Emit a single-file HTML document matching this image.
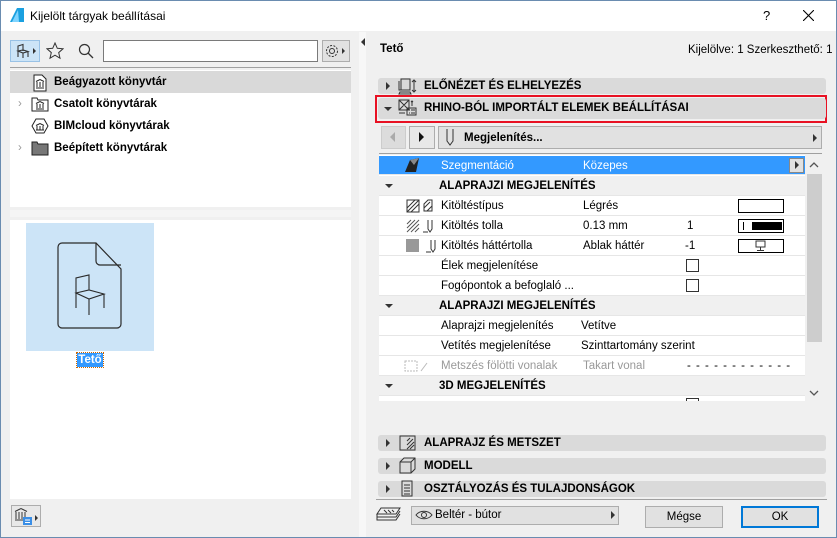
<!DOCTYPE html>
<html><head><meta charset="utf-8"><style>
*{box-sizing:border-box;margin:0;padding:0}
body{width:837px;height:538px;overflow:hidden;background:#f0f0f0;font-family:"Liberation Sans",sans-serif;font-size:11.5px;color:#000;position:relative}
.a{position:absolute}
.b{font-weight:bold}
.row{position:absolute;left:379px;width:426px;height:20px;background:#fff;border-bottom:1px solid #e6e6e6}
.row span{position:absolute;top:4px;white-space:nowrap}
.hdr{background:#f0f0f0}
.ph{position:absolute;left:378px;width:448px;height:16px;background:#dadada;border-radius:3px}
.ph span{position:absolute;top:2px;font-weight:bold;font-size:11.5px}
.tri{position:absolute;width:0;height:0;border-top:4px solid transparent;border-bottom:4px solid transparent;border-left:4px solid #333}
.trd{position:absolute;width:0;height:0;border-left:4px solid transparent;border-right:4px solid transparent;border-top:4px solid #333}
.cb{position:absolute;width:13px;height:13px;border:1px solid #333;background:#fff}
.sw{position:absolute;left:738px;width:46px;height:14px;border:1px solid #000;background:#fff;top:3px}
</style></head><body>
<div class="a" style="left:0;top:0;width:837px;height:538px;border:1px solid #6a8cb0"></div>
<div class="a" style="left:1px;top:1px;width:835px;height:30px;background:#fff"></div>
<svg class="a" style="left:9px;top:7px" width="16" height="16"><path d="M1 15 L8 1 L15 1 L15 15 Z" fill="#1aa0e0"/><path d="M3 15 L9 3 L10 15Z" fill="#7fd4ff"/></svg>
<div class="a" style="left:30px;top:9px;font-size:12px">Kijelölt tárgyak beállításai</div>
<div class="a" style="left:763px;top:8px;font-size:13px">?</div>
<svg class="a" style="left:803px;top:10px" width="11" height="11"><path d="M0 0L11 11M11 0L0 11" stroke="#000" stroke-width="1.1"/></svg>

<div class="a" style="left:10px;top:40px;width:30px;height:22px;background:#cce4f7;border:1px solid #99c2e6"></div>
<svg class="a" style="left:13px;top:42px" width="26" height="18"><path d="M5 15V4l5-1.5V9M5 9l5-1 5 1.5-5 1.5zM10 10.5V16M15 9.5V15" stroke="#333" fill="none" stroke-width="1.1"/><path d="M20 6l3 3-3 3z" fill="#333"/></svg>
<svg class="a" style="left:46px;top:42px" width="18" height="18"><path d="M9 1l2.3 5.3 5.7.5-4.3 3.8 1.3 5.6L9 13.2 4 16.2l1.3-5.6L1 6.8l5.7-.5z" stroke="#333" fill="none"/></svg>
<svg class="a" style="left:77px;top:42px" width="18" height="18"><circle cx="7.5" cy="7.5" r="5" stroke="#333" fill="none" stroke-width="1.2"/><path d="M11 11l5 5" stroke="#333" stroke-width="1.3"/></svg>
<div class="a" style="left:103px;top:40px;width:215px;height:22px;background:#fff;border:1px solid #7a7a7a"></div>
<div class="a" style="left:322px;top:40px;width:28px;height:22px;background:#e1e1e1;border:1px solid #adadad"></div>
<svg class="a" style="left:324px;top:42px" width="24" height="18"><circle cx="8" cy="9" r="5.5" stroke="#333" fill="none" stroke-dasharray="2 1.4"/><circle cx="8" cy="9" r="2.5" stroke="#333" fill="none"/><path d="M18 6l3 3-3 3z" fill="#333"/></svg>
<div class="a" style="left:10px;top:67px;width:341px;height:1px;background:#a0a0a0"></div>

<div class="a" style="left:10px;top:70px;width:341px;height:137px;background:#fff"></div>
<div class="a" style="left:10px;top:71px;width:341px;height:22px;background:#d9d9d9"></div>
<svg class="a" style="left:32px;top:74px" width="16" height="18"><path d="M2 1h8l4 4v12H2z" stroke="#222" fill="#fff"/><path d="M4 14h8M5 8v5M8 8v5M11 8v5M4 7.5l4-2 4 2" stroke="#222" fill="none"/></svg>
<div class="a b" style="left:54px;top:76px">Beágyazott könyvtár</div>
<div class="a" style="left:18px;top:98px;color:#999">›</div>
<svg class="a" style="left:31px;top:96px" width="18" height="16"><path d="M1 2h5l1 2h10v11H1z" stroke="#222" fill="#fff"/><path d="M5 13h8M6 8v4M9 8v4M12 8v4M5 7.5l4-2 4 2" stroke="#222" fill="none"/></svg>
<div class="a b" style="left:54px;top:98px">Csatolt könyvtárak</div>
<svg class="a" style="left:31px;top:118px" width="18" height="16"><path d="M5 1h8l4 7-4 7H5L1 8z" stroke="#222" fill="#fff"/><path d="M5 12h8M6 8v4M9 8v4M12 8v4M5 7.5l4-2 4 2" stroke="#222" fill="none"/></svg>
<div class="a b" style="left:54px;top:120px">BIMcloud könyvtárak</div>
<div class="a" style="left:18px;top:142px;color:#999">›</div>
<svg class="a" style="left:31px;top:140px" width="18" height="16"><path d="M1 2h5l1 2h10v11H1z" stroke="#222" fill="#777"/></svg>
<div class="a b" style="left:54px;top:142px">Beépített könyvtárak</div>

<div class="a" style="left:10px;top:210px;width:341px;height:7px;background:#f5f5f5"></div>
<div class="a" style="left:10px;top:220px;width:341px;height:279px;background:#fff"></div>
<div class="a" style="left:26px;top:223px;width:128px;height:128px;background:#cce4f7"></div>
<svg class="a" style="left:26px;top:223px" width="128" height="128"><path d="M36 20h34l25 26v55a4 4 0 0 1-4 4H36a4 4 0 0 1-4-4V24a4 4 0 0 1 4-4z" stroke="#2a2a2a" fill="none" stroke-width="1.2"/>
<path d="M70 20v18a4 4 0 0 0 4 4h21" stroke="#2a2a2a" fill="none" stroke-width="1.2"/>
<path d="M50 85V55l13-3v15M50 70l13-3 15 4-15 5zM63 76v16M78 71v14M50 70v15" stroke="#2a2a2a" fill="none" stroke-width="1.1"/></svg>
<div class="a" style="left:77px;top:353px;width:26px;height:14px;background:#3399ff;outline:1px dotted #c60;color:#fff;font-weight:bold;font-size:11.5px;text-align:center;line-height:14px">Tető</div>
<div class="a" style="left:11px;top:505px;width:30px;height:22px;border:1px solid #adadad;background:#e8e8e8"></div>
<svg class="a" style="left:13px;top:507px" width="28" height="20"><path d="M2 13h12M3 5v7M6 5v7M9 5v7M12 5v7M2 4.5l6-3 6 3" stroke="#333" fill="none"/><rect x="10" y="10" width="9" height="8" fill="#3a8ee6"/><path d="M12 13h5M12 15.5h5" stroke="#fff"/><path d="M22 8l3 3-3 3z" fill="#333"/></svg>

<div class="a" style="left:359px;top:32px;width:7px;height:505px;background:#f7f7f7"></div>
<div class="a" style="left:361px;top:38px;border-top:4px solid transparent;border-bottom:4px solid transparent;border-right:4px solid #333"></div>

<div class="a b" style="left:380px;top:43px">Tető</div>
<div class="a" style="left:688px;top:44px;font-size:11.5px">Kijelölve: 1 Szerkeszthető: 1</div>

<div class="ph" style="top:78px"><span style="left:46px">ELŐNÉZET ÉS ELHELYEZÉS</span></div>
<div class="tri" style="left:386px;top:82px"></div>
<svg class="a" style="left:398px;top:78px" width="20" height="17"><rect x="3" y="1" width="9" height="11" stroke="#333" fill="none"/><path d="M1 3v9h2M2 14h10l1 2H1zM16 2v12M14 4l2-2 2 2M14 12l2 2 2-2" stroke="#333" fill="none"/></svg>
<div class="a" style="left:375px;top:95px;width:452px;height:28px;border:2px solid #e81123"></div>
<div class="ph" style="top:98px;height:21px"><span style="left:46px;top:4px">RHINO-BÓL IMPORTÁLT ELEMEK BEÁLLÍTÁSAI</span></div>
<div class="trd" style="left:384px;top:107px"></div>
<svg class="a" style="left:398px;top:99px" width="20" height="18"><rect x="1" y="1" width="10" height="10" stroke="#333" fill="none"/><path d="M1 1l10 10M11 1L1 11M14 2v5M13 3l1-1 1 1M9 9h9v7H9zM11 11h1M13 11h4M11 14h1M13 14h4M1 14h6" stroke="#333" fill="none"/></svg>

<div class="a" style="left:381px;top:126px;width:25px;height:23px;background:#dcdcdc;border:1px solid #ccc"></div>
<div class="a" style="left:390px;top:132px;border-top:5px solid transparent;border-bottom:5px solid transparent;border-right:5px solid #aaa"></div>
<div class="a" style="left:409px;top:126px;width:26px;height:23px;background:#e8e8e8;border:1px solid #adadad"></div>
<div class="a" style="left:419px;top:132px;border-top:5px solid transparent;border-bottom:5px solid transparent;border-left:5px solid #111"></div>
<div class="a" style="left:438px;top:126px;width:384px;height:23px;background:#e1e1e1;border:1px solid #adadad"></div>
<svg class="a" style="left:445px;top:128px" width="10" height="19"><path d="M2 1v12l3 4 3-4V1" stroke="#333" fill="none"/></svg>
<div class="a b" style="left:464px;top:132px">Megjelenítés...</div>
<div class="tri" style="left:813px;top:134px"></div>
<div class="a" style="left:379px;top:153px;width:443px;height:1px;background:#a0a0a0"></div>

<div class="a" style="left:379px;top:155px;width:426px;height:246px;background:#fff;overflow:hidden"></div>
<div class="row" style="top:156px;height:19px;background:#3399ff;color:#fff"><span style="left:62px;color:#fff">Szegmentáció</span><span style="left:204px;color:#fff">Közepes</span></div>
<svg class="a" style="left:404px;top:157px" width="16" height="16"><path d="M1 15L6 3l9-2-3 14z" fill="#222"/><path d="M6 3l9-2-5 7z" fill="#888"/></svg>
<div class="a" style="left:789px;top:158px;width:15px;height:15px;background:#e1e1e1;border:1px solid #888"></div>
<div class="tri" style="left:795px;top:161px"></div>
<div class="row hdr" style="top:176px"><span style="left:60px" class="b">ALAPRAJZI MEGJELENÍTÉS</span></div>
<div class="trd" style="left:385px;top:184px"></div>
<div class="row" style="top:196px"><span style="left:62px">Kitöltéstípus</span><span style="left:204px">Légrés</span></div>
<svg class="a" style="left:406px;top:199px" width="32" height="14"><rect x="1" y="1" width="12" height="12" fill="#fff" stroke="#333"/><path d="M1 9l8-8M1 13L13 1M5 13l8-8" stroke="#333"/><path d="M18 12V5l4-4h4v11zM18 9l6-6M21 12l5-5" stroke="#333" fill="none"/></svg>
<div class="sw" style="top:199px"></div>
<div class="row" style="top:216px"><span style="left:62px">Kitöltés tolla</span><span style="left:204px">0.13 mm</span><span style="left:308px">1</span></div>
<svg class="a" style="left:406px;top:219px" width="32" height="14"><path d="M1 9l8-8M1 13L13 1M5 13l8-8M1 5l4-4M9 13l4-4" stroke="#555"/><path d="M22 1v9l2 3 2-3V1M17 13h5" stroke="#333" fill="none"/></svg>
<div class="sw" style="top:219px"></div><div class="a" style="left:743px;top:222px;width:1px;height:8px;background:#000"></div><div class="a" style="left:752px;top:222px;width:30px;height:8px;background:#000"></div>
<div class="row" style="top:236px"><span style="left:62px">Kitöltés háttértolla</span><span style="left:204px">Ablak háttér</span><span style="left:306px">-1</span></div>
<div class="a" style="left:406px;top:239px;width:13px;height:13px;background:#999"></div>
<svg class="a" style="left:426px;top:239px" width="12" height="14"><path d="M5 1v9l2 3 2-3V1M0 13h5" stroke="#333" fill="none"/></svg>
<div class="sw" style="top:239px"></div>
<svg class="a" style="left:754px;top:240px" width="14" height="12"><rect x="2" y="1" width="9" height="6" stroke="#333" fill="none"/><path d="M6.5 7v3M3 10.5h7" stroke="#333"/></svg>
<div class="row" style="top:256px"><span style="left:62px">Élek megjelenítése</span></div>
<div class="cb" style="left:686px;top:259px"></div>
<div class="row" style="top:276px"><span style="left:62px">Fogópontok a befoglaló ...</span></div>
<div class="cb" style="left:686px;top:279px"></div>
<div class="row hdr" style="top:296px"><span style="left:60px" class="b">ALAPRAJZI MEGJELENÍTÉS</span></div>
<div class="trd" style="left:385px;top:304px"></div>
<div class="row" style="top:316px"><span style="left:62px">Alaprajzi megjelenítés</span><span style="left:202px">Vetítve</span></div>
<div class="row" style="top:336px"><span style="left:62px">Vetítés megjelenítése</span><span style="left:202px">Szinttartomány szerint</span></div>
<div class="row" style="top:356px;color:#999"><span style="left:62px;color:#999">Metszés fölötti vonalak</span><span style="left:204px;color:#999">Takart vonal</span><span style="left:308px;color:#000;letter-spacing:1px">- - - - - - - - - - - -</span></div>
<svg class="a" style="left:404px;top:358px" width="26" height="16"><rect x="1" y="3" width="12" height="10" stroke="#bbb" fill="none" stroke-dasharray="2 1"/><path d="M17 13l6-8" stroke="#bbb"/></svg>
<div class="row hdr" style="top:376px"><span style="left:60px" class="b">3D MEGJELENÍTÉS</span></div>
<div class="trd" style="left:385px;top:384px"></div>
<div class="cb" style="left:686px;top:398px;height:3px;border-bottom:none"></div>

<div class="a" style="left:807px;top:174px;width:15px;height:168px;background:#cdcdcd"></div>
<svg class="a" style="left:809px;top:161px" width="10" height="8"><path d="M1 6l4-4 4 4" stroke="#555" fill="none" stroke-width="1.3"/></svg>
<svg class="a" style="left:809px;top:389px" width="10" height="8"><path d="M1 2l4 4 4-4" stroke="#555" fill="none" stroke-width="1.3"/></svg>

<div class="ph" style="top:435px"><span style="left:46px">ALAPRAJZ ÉS METSZET</span></div>
<div class="tri" style="left:386px;top:439px"></div>
<svg class="a" style="left:399px;top:434px" width="18" height="18"><rect x="1" y="2" width="15" height="14" stroke="#333" fill="none"/><path d="M8 15l7-7M11 15l4-4M8 11l6-6M8 7l3-3" stroke="#333"/></svg>
<div class="ph" style="top:458px"><span style="left:46px">MODELL</span></div>
<div class="tri" style="left:386px;top:462px"></div>
<svg class="a" style="left:399px;top:457px" width="18" height="18"><path d="M1 5l4-4h11v11l-4 4H1zM1 5h11v11M12 5l4-4" stroke="#333" fill="none"/></svg>
<div class="ph" style="top:481px"><span style="left:46px">OSZTÁLYOZÁS ÉS TULAJDONSÁGOK</span></div>
<div class="tri" style="left:386px;top:485px"></div>
<svg class="a" style="left:401px;top:480px" width="14" height="18"><rect x="1" y="1" width="10" height="15" stroke="#333" fill="none"/><path d="M3 5h6M3 8h6M3 11h6M3 14h6" stroke="#333"/></svg>
<div class="a" style="left:376px;top:499px;width:451px;height:1px;background:#a0a0a0"></div>

<svg class="a" style="left:376px;top:506px" width="26" height="18"><path d="M5 2h19l-4 6H1zM1 8v3h19l4-6M1 11v3h19l4-6" stroke="#333" fill="none"/><path d="M8 4l3 3M12 4l3 3M16 4l2 2" stroke="#333"/></svg>
<div class="a" style="left:411px;top:506px;width:208px;height:19px;background:#e1e1e1;border:1px solid #adadad"></div>
<svg class="a" style="left:415px;top:509px" width="18" height="12"><path d="M1 6c4-5 12-5 16 0-4 5-12 5-16 0z" stroke="#333" fill="none"/><circle cx="9" cy="6" r="2.5" stroke="#333" fill="none"/></svg>
<div class="a" style="left:435px;top:509px">Beltér - bútor</div>
<div class="tri" style="left:611px;top:511px"></div>
<div class="a" style="left:645px;top:506px;width:78px;height:22px;background:#e1e1e1;border:1px solid #adadad;text-align:center;line-height:20px">Mégse</div>
<div class="a" style="left:741px;top:506px;width:78px;height:22px;background:#e1e1e1;border:2px solid #0078d7;text-align:center;line-height:18px">OK</div>
</body></html>
